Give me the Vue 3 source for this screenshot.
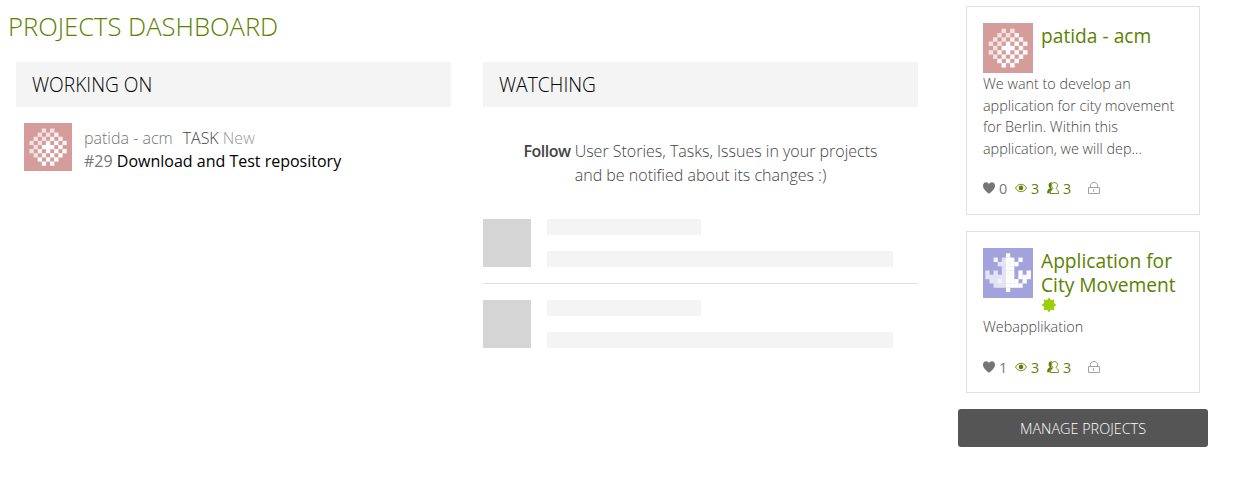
<script setup>
const checker = [
  '...a.a...',
  '..a.a.b..',
  '.a.a.b.b.',
  'a.a.c.c.b',
  '.a.ccc.c.',
  'a.b.c.c.c',
  '.a.b.c.c.',
  '..c.c.c..',
  '...c.c...',
]
const leaf = [
  '.....c.....',
  '..b.acc.c..',
  '...aaccc...',
  '....acc....',
  'a.a.acc.c.c',
  'aaaaacc.ccc',
  '.aabaccc.c.',
  '..aaacccc..',
  '.....c.....',
]
const opacity = { a: 0.7, b: 0.88, c: 1 }
const cellsOf = (rows) =>
  rows.flatMap((r, y) =>
    [...r].map((k, x) => ({ x, y, o: opacity[k] })).filter((c) => c.o),
  )
const avatars = {
  rose: { bg: '#d49c9b', cells: cellsOf(checker), t: 'translate(5.7 5.7) scale(4.29)' },
  leaf: { bg: '#a3a2dc', cells: cellsOf(leaf), t: 'translate(2.3 5.3) scale(4.13 4.29)' },
}
const projects = [
  {
    name: 'patida - acm', avatar: 'rose', likes: 0, badge: false,
    lines: ['We want to develop an', 'application for city movement', 'for Berlin. Within this', 'application, we will dep...'],
  },
  { name: 'Application for City Movement', avatar: 'leaf', likes: 1, badge: true, lines: ['Webapplikation'] },
]
</script>

<template>
  <div class="page">
    <main>
      <h1>PROJECTS DASHBOARD</h1>
      <div class="columns">
        <section>
          <h2>WORKING ON</h2>
          <div class="task">
            <svg class="avatar" viewBox="0 0 50 50">
              <rect width="50" height="50" :fill="avatars.rose.bg" />
              <g :transform="avatars.rose.t" fill="#fff">
                <rect v-for="(c, i) in avatars.rose.cells" :key="i" :x="c.x" :y="c.y" width="1.04" height="1.04" :opacity="c.o" />
              </g>
            </svg>
            <div class="task-text">
              <div class="meta"><span class="proj">patida - acm</span><span class="type">TASK</span> <span class="status">New</span></div>
              <div class="title"><span class="ref">#29</span> Download and Test repository</div>
            </div>
          </div>
        </section>
        <section>
          <h2>WATCHING</h2>
          <p class="hint"><strong>Follow</strong> User Stories, Tasks, Issues in your projects<br>and be notified about its changes :)</p>
          <div v-for="n in 2" :key="n" class="ghost">
            <div class="ghost-img"></div>
            <div class="ghost-lines"><div class="short"></div><div class="long"></div></div>
          </div>
        </section>
      </div>
    </main>
    <aside>
      <article v-for="p in projects" :key="p.name" :class="['card', { compact: p.badge }]">
        <div class="card-head">
          <svg class="card-avatar" viewBox="0 0 50 50">
            <rect width="50" height="50" :fill="avatars[p.avatar].bg" />
            <g :transform="avatars[p.avatar].t" fill="#fff">
              <rect v-for="(c, i) in avatars[p.avatar].cells" :key="i" :x="c.x" :y="c.y" width="1.04" height="1.04" :opacity="c.o" />
            </g>
          </svg>
          <h3>
            {{ p.name }}
            <svg v-if="p.badge" class="badge" viewBox="0 0 16 16">
              <path fill="#9dce0a" d="M8 .6l1.900 2.300 3.300-.5-.4 3.300L15.400 8l-2.600 2 .5 3.300-3.400-.5L8 15.400 6 12.800l-3.300.5L3.200 10 .6 8l2.600-2.200-.5-3.400 3.400.5z" />
            </svg>
          </h3>
        </div>
        <p class="desc"><span v-for="l in p.lines" :key="l">{{ l }}</span></p>
        <div class="stats">
          <span class="stat grey">
            <svg viewBox="0 0 12 12"><path fill="#767676" d="M6 11.700C3.500 9.700 0 7.200 0 3.700 0 1.700 1.300.3 3 .3c1.300 0 2.400.7 3 1.900C6.600 1 7.700.3 9 .3c1.700 0 3 1.400 3 3.400 0 3.500-3.500 6-6 8z" /></svg>{{ p.likes }}
          </span>
          <span class="stat">
            <svg viewBox="0 0 12 12"><path fill="none" stroke="#5b8200" stroke-width=".9" d="M.5 6C2 3.500 3.800 2.300 6 2.300S10 3.500 11.500 6C10 8.500 8.200 9.700 6 9.700S2 8.500.5 6z" /><circle cx="6" cy="5.900" r="2.300" fill="#5b8200" /></svg>3
          </span>
          <span class="stat">
            <svg viewBox="0 0 12 12"><path fill="#5b8200" d="M5.200.3C3 0 1.500 1.300 1.600 3.200c0 1.200.5 2.200 1.300 3C1.200 7 .1 8 .1 11.300h2.500c.2-1.900.9-2.900 2.600-3.600C3.900 6 3.500 2.500 5.200.3z" /><path fill="none" stroke="#5b8200" stroke-width=".9" d="M7.500.6c1.800 0 3 1.200 3 2.800 0 1.300-.6 2.200-1.500 2.900.3 1.300 2.600 1.200 2.600 5.200H3.200c0-3.400 2.500-3.600 2.800-5.200-.9-.7-1.500-1.600-1.500-2.900C4.500 1.800 5.700.6 7.500.6z" /></svg>3
          </span>
          <svg class="lock" viewBox="0 0 12 12"><path fill="none" stroke="#999" stroke-width=".9" d="M.5 5.500h11v6H.5zM2.500 5.500V3.300C2.500 1.500 4 .5 6 .5s3.500 1 3.500 2.800v2.200M5.500 7.300v2.500" /></svg>
        </div>
      </article>
      <button class="manage">MANAGE PROJECTS</button>
    </aside>
  </div>
</template>

<style>
body { background: #fff; }
</style>

<style scoped>
.page { display: flex; width: 1246px; height: 487px; overflow: hidden; font-family: "Open Sans", sans-serif; font-weight: 300; color: #444; }
main { width: 958px; }
h1, h2, h3, p { margin: 0; font-weight: 300; }
h1 { margin: 8px 0 0 8px; font-size: 25.6px; line-height: 38px; color: #5b8200; }
.columns { display: flex; gap: 32px; margin: 16px 0 0 16px; }
section { width: 435px; }
h2 { height: 45px; line-height: 45px; padding-left: 16px; background: #f4f4f4; color: #000; font-size: 19.2px; }
.task { display: flex; padding: 16px 8px; gap: 12px; }
.avatar { width: 48px; height: 48px; }
.task-text { padding-top: 4px; font-size: 16px; line-height: 23px; white-space: nowrap; }
.proj { color: #767676; margin-right: 10px; }
.status { color: #999; }
.title { color: #000; font-weight: 400; }
.ref { color: #767676; }
.hint { margin-top: 32px; font-size: 16px; line-height: 24px; height: 80px; text-align: center; }
.hint strong { font-weight: 600; letter-spacing: -0.5px; }
.ghost { display: flex; gap: 16px; height: 48px; padding-bottom: 16px; }
.ghost + .ghost { border-top: 1px solid #e0e0e0; padding-top: 16px; }
.ghost-img { width: 48px; background: #d5d5d5; }
.ghost-lines { display: flex; flex-direction: column; justify-content: space-between; }
.short, .long { height: 16px; background: #f4f4f4; }
.short { width: 154px; }
.long { width: 346px; }
aside { width: 250px; padding-top: 6px; }
.card { box-sizing: border-box; width: 234px; height: 209px; margin: 0 8px 16px; padding: 16px; border: 1px solid #e0e0e0; display: flex; flex-direction: column; }
.card.compact { height: 162px; padding-bottom: 15px; }
.card-head { display: flex; gap: 8px; height: 50px; }
.compact .card-head { height: 68px; }
.card-avatar { flex: none; width: 50px; height: 50px; }
h3 { font-size: 19.2px; font-weight: 400; line-height: 24px; color: #5b8200; padding-top: 1px; width: 142px; }
.badge { display: block; width: 16px; height: 16px; }
.desc { font-size: 14.4px; line-height: 21.7px; color: #444; }
.desc span { display: block; white-space: nowrap; }
.stats { display: flex; align-items: center; margin-top: auto; height: 20px; font-size: 14.4px; font-weight: 400; color: #5b8200; }
.stat { display: flex; align-items: center; gap: 4px; width: 32px; }
.stat svg, .lock { width: 12px; height: 12px; }
.grey { color: #767676; }
.lock { margin-left: 9px; }
.manage { display: block; width: 250px; height: 38px; padding: 1px 0 0; border: 0; border-radius: 3px; background: #555; color: #fff; font: 300 14.4px "Open Sans", sans-serif; }
</style>
